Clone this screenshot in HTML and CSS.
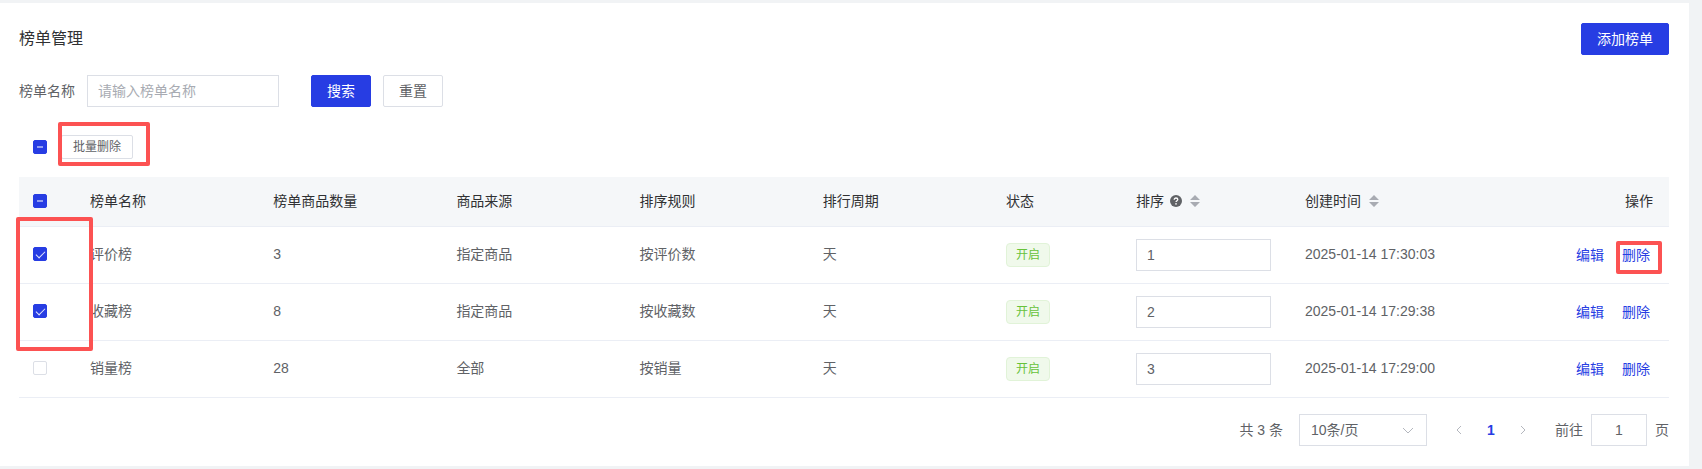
FILE: index.html
```html
<!DOCTYPE html>
<html lang="zh-CN">

<head>
  <meta charset="UTF-8">
  <meta name="viewport" content="width=device-width, initial-scale=1.0">
  <title>榜单管理</title>
  <link rel="stylesheet" href="styles.css">
</head>

<body>
  <main class="panel">
    <header class="panel-header">
      <h1 class="title">榜单管理</h1>
      <button class="btn primary" type="button">添加榜单</button>
    </header>

    <form class="search">
      <label class="search-label" for="name">榜单名称</label>
      <input class="input search-input" id="name" type="text" placeholder="请输入榜单名称">
      <button class="btn primary" type="button">搜索</button>
      <button class="btn" type="reset">重置</button>
    </form>

    <div class="batch">
      <input class="checkbox some" type="checkbox" aria-label="全选">
      <div class="marked">
        <button class="btn small" type="button">批量删除</button>
        <span class="mark mark-batch"></span>
      </div>
    </div>

    <table class="table">
      <colgroup>
        <col class="col-check">
        <col span="5">
        <col class="col-status">
        <col class="col-sort">
        <col class="col-time">
        <col class="col-action">
      </colgroup>
      <thead>
        <tr>
          <th class="check"><input class="checkbox some" type="checkbox" aria-label="全选"></th>
          <th>榜单名称</th>
          <th>榜单商品数量</th>
          <th>商品来源</th>
          <th>排序规则</th>
          <th>排行周期</th>
          <th>状态</th>
          <th>
            <div class="sortable">
              排序
              <svg class="help" viewBox="0 0 12 12">
                <circle cx="6" cy="6" r="6" fill="#606266"/>
                <path d="M4.2 4.7C4.2 3.6 5 3 6 3s1.800.6 1.800 1.600C7.800 5.700 6 5.700 6 7.100" fill="none" stroke="#fff" stroke-width="1.300"/>
                <circle cx="6" cy="8.900" r=".8" fill="#fff"/>
              </svg>
              <svg class="caret" viewBox="0 0 10 12"><path d="M0 5l5-5 5 5zM0 7h10l-5 5z"/></svg>
            </div>
          </th>
          <th>
            <div class="sortable">
              创建时间
              <svg class="caret" viewBox="0 0 10 12"><path d="M0 5l5-5 5 5zM0 7h10l-5 5z"/></svg>
            </div>
          </th>
          <th class="right">操作</th>
        </tr>
      </thead>
      <tbody>
        <tr>
          <td class="check marked">
            <input class="checkbox" type="checkbox" aria-label="评价榜" checked>
            <span class="mark mark-rows"></span>
          </td>
          <td>评价榜</td>
          <td>3</td>
          <td>指定商品</td>
          <td>按评价数</td>
          <td>天</td>
          <td class="control"><span class="tag">开启</span></td>
          <td class="control"><input class="input sort-input" type="text" value="1" aria-label="排序"></td>
          <td>2025-01-14 17:30:03</td>
          <td class="control">
            <div class="actions">
              <a href="#">编辑</a>
              <span class="marked"><a href="#">删除</a><span class="mark mark-delete"></span></span>
            </div>
          </td>
        </tr>
        <tr>
          <td class="check"><input class="checkbox" type="checkbox" aria-label="收藏榜" checked></td>
          <td>收藏榜</td>
          <td>8</td>
          <td>指定商品</td>
          <td>按收藏数</td>
          <td>天</td>
          <td class="control"><span class="tag">开启</span></td>
          <td class="control"><input class="input sort-input" type="text" value="2" aria-label="排序"></td>
          <td>2025-01-14 17:29:38</td>
          <td class="control">
            <div class="actions">
              <a href="#">编辑</a>
              <a href="#">删除</a>
            </div>
          </td>
        </tr>
        <tr>
          <td class="check"><input class="checkbox" type="checkbox" aria-label="销量榜"></td>
          <td>销量榜</td>
          <td>28</td>
          <td>全部</td>
          <td>按销量</td>
          <td>天</td>
          <td class="control"><span class="tag">开启</span></td>
          <td class="control"><input class="input sort-input" type="text" value="3" aria-label="排序"></td>
          <td>2025-01-14 17:29:00</td>
          <td class="control">
            <div class="actions">
              <a href="#">编辑</a>
              <a href="#">删除</a>
            </div>
          </td>
        </tr>
      </tbody>
    </table>

    <nav class="pagination">
      <span>共 3 条</span>
      <div class="size">
        <select class="input size-select" aria-label="每页条数">
          <option>10条/页</option>
        </select>
        <svg class="size-arrow" viewBox="0 0 12 12"><path d="M1 4l5 5 5-5"/></svg>
      </div>
      <div class="pager">
        <button class="page" type="button" aria-label="上一页" disabled>
          <svg viewBox="0 0 12 12"><path d="M8 2L4 6l4 4"/></svg>
        </button>
        <button class="page current" type="button">1</button>
        <button class="page" type="button" aria-label="下一页" disabled>
          <svg viewBox="0 0 12 12"><path d="M4 2l4 4-4 4"/></svg>
        </button>
      </div>
      <label class="jump">
        前往
        <input class="input jump-input" type="text" value="1">
        页
      </label>
    </nav>
  </main>

  <script>
    for (const box of document.querySelectorAll(".some")) {
      box.indeterminate = true;
    }
  </script>
</body>

</html>
```
FILE: styles.css
```css
* {
  box-sizing: border-box;
}

body {
  margin: 0;
  padding: 3px 13px 3px 0;
  background: #f1f3f5;
  color: #606266;
  font: 14px/22px "Liberation Sans", "Noto Sans CJK SC", sans-serif;
}

button, input, select {
  margin: 0;
  font: inherit;
  color: inherit;
}

a {
  color: #273de3;
  text-decoration: none;
}

.panel {
  padding: 20px 20px 20px 19px;
  background: #fff;
}

.panel-header {
  display: flex;
  align-items: center;
  justify-content: space-between;
}

.title {
  margin: 0;
  font-size: 16px;
  font-weight: 400;
  color: #303133;
}

.btn {
  height: 32px;
  padding: 0 15px;
  border: 1px solid #dcdfe6;
  border-radius: 2px;
  background: #fff;
  line-height: 20px;
}

.primary {
  border-color: #273de3;
  background: #273de3;
  color: #fff;
}

.small {
  display: block;
  height: 24px;
  padding: 0 11px;
  font-size: 12px;
}

.input {
  height: 32px;
  padding: 0 10px;
  border: 1px solid #dcdfe6;
  border-radius: 0;
  background: #fff;
}

.input::placeholder {
  color: #a8abb2;
}

.search {
  display: flex;
  align-items: center;
  gap: 12px;
  margin-top: 20px;
}

.search-input {
  width: 192px;
  margin-right: 20px;
}

.batch {
  display: flex;
  align-items: center;
  gap: 14px;
  padding: 28px 14px 18px;
}

.checkbox {
  appearance: none;
  display: block;
  position: relative;
  width: 14px;
  height: 14px;
  border: 1px solid #dcdfe6;
  border-radius: 2px;
  background: #fff;
}

.checkbox:checked, .checkbox:indeterminate {
  border-color: #273de3;
  background: #273de3;
}

.checkbox:checked::after {
  content: "";
  position: absolute;
  left: 4px;
  top: 1px;
  width: 4px;
  height: 8px;
  border: solid #e4e7fc;
  border-width: 0 1px 1px 0;
  transform: rotate(45deg);
}

.checkbox:indeterminate::after {
  content: "";
  position: absolute;
  left: 3px;
  top: 5px;
  width: 6px;
  height: 2px;
  background: #939ef1;
}

.table {
  width: 100%;
  table-layout: fixed;
  border-collapse: separate;
  border-spacing: 0;
}

.col-check { width: 55px; }
.col-status { width: 130px; }
.col-sort { width: 169px; }
.col-time { width: 220px; }
.col-action { width: 160px; }

.table th, .table td {
  padding: 0 16px 2px;
  border-bottom: 1px solid #ebeef5;
  text-align: left;
  vertical-align: middle;
}

.table th {
  height: 50px;
  background: #f5f7f9;
  color: #303133;
  font-weight: 400;
}

.table td {
  height: 57px;
}

.table .check {
  padding: 0 14px 2px;
}

.table .control {
  padding-bottom: 0;
}

.table .right {
  text-align: right;
}

.sortable {
  display: flex;
  align-items: center;
}

.help {
  width: 12px;
  height: 12px;
  margin-left: 6px;
}

.caret {
  width: 10px;
  height: 12px;
  margin-left: 8px;
  fill: #a8abb2;
}

.tag {
  display: block;
  width: 44px;
  height: 24px;
  border: 1px solid #e1f3d8;
  border-radius: 4px;
  background: #f0f9eb;
  color: #67c23a;
  font-size: 12px;
  text-align: center;
}

.sort-input {
  display: block;
  width: 135px;
}

.actions {
  display: flex;
  justify-content: flex-end;
  gap: 18px;
  padding-right: 3px;
}

/* highlight frames */
.marked {
  position: relative;
}

.mark {
  position: absolute;
  z-index: 1;
  border: 4px solid #fc5252;
  border-radius: 2px;
  pointer-events: none;
}

.mark-batch {
  left: -3px;
  top: -13px;
  width: 92px;
  height: 44px;
}

.mark-rows {
  left: -3px;
  top: -10px;
  width: 77px;
  height: 134px;
}

.mark-delete {
  left: -6px;
  top: -3px;
  width: 46px;
  height: 33px;
}

.pagination {
  display: flex;
  align-items: center;
  justify-content: flex-end;
  gap: 16px;
  margin-top: 16px;
}

.size {
  position: relative;
}

.size-select {
  appearance: none;
  display: block;
  width: 128px;
  padding: 0 11px;
}

.size-arrow {
  position: absolute;
  right: 13px;
  top: 10px;
  width: 12px;
  height: 12px;
}

.size-arrow path, .page path {
  fill: none;
  stroke: #b4b7be;
}

.pager {
  display: flex;
}

.page {
  display: flex;
  align-items: center;
  justify-content: center;
  width: 32px;
  height: 32px;
  padding: 0;
  border: 0;
  background: none;
}

.page svg {
  width: 12px;
  height: 12px;
}

.current {
  color: #273de3;
  font-weight: 700;
}

.jump {
  display: flex;
  align-items: center;
  gap: 8px;
}

.jump-input {
  width: 56px;
  text-align: center;
}
```
